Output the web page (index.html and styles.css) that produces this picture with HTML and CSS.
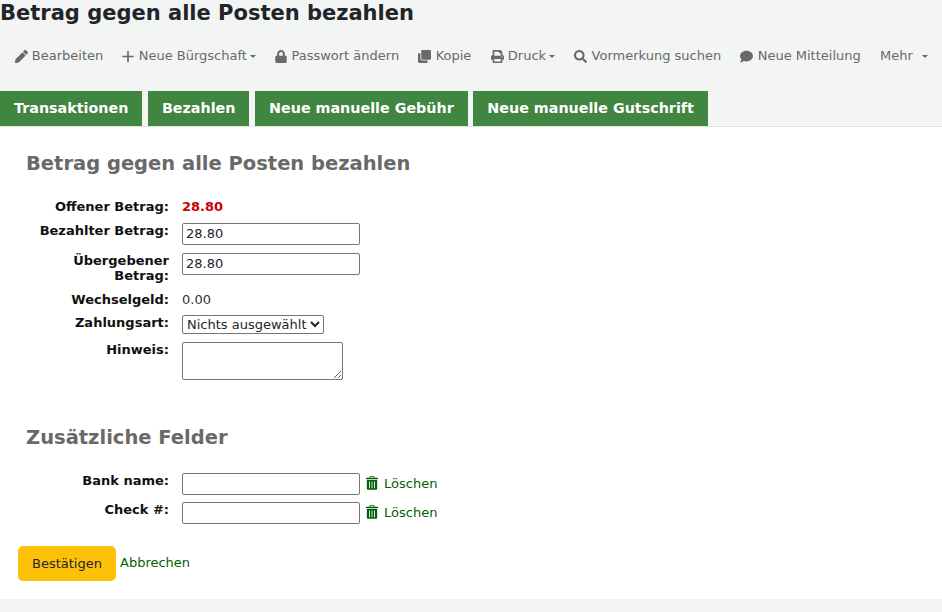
FILE: index.html
```html
<!DOCTYPE html>
<html lang="de">
<head>
<meta charset="utf-8">
<title>Betrag gegen alle Posten bezahlen</title>
<link rel="stylesheet" href="styles.css">
</head>
<body>
<h1 class="page-title">Betrag gegen alle Posten bezahlen</h1>
<div class="toolbar">
  <a class="tool"><svg class="ico" viewBox="0 0 512 512"><path d="M497.9 142.1l-46.1 46.1c-4.7 4.7-12.3 4.7-17 0l-111-111c-4.7-4.7-4.7-12.3 0-17l46.1-46.1c18.7-18.7 49.1-18.7 67.9 0l60.1 60.1c18.8 18.7 18.8 49.1 0 67.9zM284.2 99.8L21.6 362.4.4 483.9c-2.9 16.4 11.4 30.6 27.8 27.8l121.5-21.3 262.6-262.6c4.7-4.7 4.7-12.3 0-17l-111-111c-4.8-4.7-12.4-4.7-17.1 0z"/></svg>Bearbeiten</a>
  <a class="tool"><svg class="ico ico-narrow" viewBox="0 0 512 512"><path d="M220 16h72v204h204v72H292v204h-72V292H16v-72h204z"/></svg>Neue Bürgschaft<span class="caret"></span></a>
  <a class="tool"><svg class="ico ico-narrow" viewBox="0 0 448 512"><path d="M400 224h-24v-72C376 68.2 307.8 0 224 0S72 68.2 72 152v72H48c-26.5 0-48 21.5-48 48v192c0 26.5 21.5 48 48 48h352c26.5 0 48-21.5 48-48V272c0-26.5-21.5-48-48-48zm-104 0H152v-72c0-39.7 32.3-72 72-72s72 32.3 72 72v72z"/></svg>Passwort ändern</a>
  <a class="tool"><svg class="ico" viewBox="0 0 512 512"><path d="M464 0c26.51 0 48 21.49 48 48v288c0 26.51-21.49 48-48 48H176c-26.51 0-48-21.49-48-48V48c0-26.51 21.49-48 48-48h288M176 416c-44.112 0-80-35.888-80-80V128H48c-26.51 0-48 21.49-48 48v288c0 26.51 21.49 48 48 48h288c26.51 0 48-21.49 48-48v-48H176z"/></svg>Kopie</a>
  <a class="tool"><svg class="ico" viewBox="0 0 512 512"><path d="M448 192V77.25c0-8.49-3.37-16.62-9.37-22.63L393.37 9.37c-6-6-14.14-9.37-22.63-9.37H96C78.33 0 64 14.33 64 32v160c-35.35 0-64 28.65-64 64v112c0 8.84 7.16 16 16 16h48v96c0 17.67 14.33 32 32 32h320c17.67 0 32-14.33 32-32v-96h48c8.84 0 16-7.16 16-16V256c0-35.35-28.65-64-64-64zm-64 256H128v-96h256v96zm0-224H128V64h192v48c0 8.84 7.16 16 16 16h48v96zm48 72c-13.25 0-24-10.75-24-24 0-13.26 10.75-24 24-24s24 10.74 24 24c0 13.25-10.75 24-24 24z"/></svg>Druck<span class="caret"></span></a>
  <a class="tool"><svg class="ico" viewBox="0 0 512 512"><path d="M505 442.7L405.3 343c-4.5-4.5-10.6-7-17-7H372c27.6-35.3 44-79.7 44-128C416 93.1 322.9 0 208 0S0 93.1 0 208s93.1 208 208 208c48.3 0 92.7-16.4 128-44v16.3c0 6.4 2.5 12.5 7 17l99.7 99.7c9.4 9.4 24.6 9.4 33.9 0l28.3-28.3c9.4-9.4 9.4-24.6.1-34zM208 336c-70.7 0-128-57.2-128-128 0-70.7 57.2-128 128-128 70.7 0 128 57.2 128 128 0 70.7-57.2 128-128 128z"/></svg>Vormerkung suchen</a>
  <a class="tool"><svg class="ico" viewBox="0 0 512 512"><path d="M256 32C114.6 32 0 125.1 0 240c0 49.6 21.4 95 57 130.7C44.5 421.1 2.7 466 2.2 466.5c-2.2 2.3-2.8 5.7-1.5 8.7S4.8 480 8 480c66.3 0 116-31.8 140.6-51.4 32.7 12.3 69 19.4 107.4 19.4 141.4 0 256-93.1 256-208S397.4 32 256 32z"/></svg>Neue Mitteilung</a>
  <a class="tool tool-more">Mehr<span class="caret caret-more"></span></a>
</div>
<div class="tabs">
  <a class="tab">Transaktionen</a>
  <a class="tab">Bezahlen</a>
  <a class="tab">Neue manuelle Gebühr</a>
  <a class="tab">Neue manuelle Gutschrift</a>
</div>
<main class="panel">
  <form>
    <h2 class="section-title">Betrag gegen alle Posten bezahlen</h2>
    <div class="rows">
      <div class="row row-owed"><label class="lab">Offener Betrag:</label><span class="owed">28.80</span></div>
      <div class="row row-paid"><label class="lab">Bezahlter Betrag:</label><input class="field" type="text" value="28.80"></div>
      <div class="row row-given"><label class="lab">Übergebener Betrag:</label><input class="field" type="text" value="28.80"></div>
      <div class="row row-change"><label class="lab">Wechselgeld:</label><span class="val">0.00</span></div>
      <div class="row row-type"><label class="lab">Zahlungsart:</label><select class="sel"><option>Nichts ausgewählt</option></select></div>
      <div class="row row-note"><label class="lab">Hinweis:</label><textarea class="note"></textarea></div>
    </div>
    <h2 class="section-title section-extra">Zusätzliche Felder</h2>
    <div class="rows">
      <div class="row row-extra"><label class="lab">Bank name:</label><input class="field" type="text"><a class="del"><svg class="trash" viewBox="0 0 448 512"><path fill-rule="evenodd" d="M160 0h128c18 0 32 14 32 32v32h112c9 0 16 7 16 16v16c0 9-7 16-16 16H16c-9 0-16-7-16-16V80c0-9 7-16 16-16h112V32c0-18 14-32 32-32zm0 32v32h128V32zM32 144h384v320c0 26-22 48-48 48H80c-26 0-48-22-48-48zm80 56v256h32V200zm96 0v256h32V200zm96 0v256h32V200z"/></svg>Löschen</a></div>
      <div class="row row-extra"><label class="lab">Check #:</label><input class="field" type="text"><a class="del"><svg class="trash" viewBox="0 0 448 512"><path fill-rule="evenodd" d="M160 0h128c18 0 32 14 32 32v32h112c9 0 16 7 16 16v16c0 9-7 16-16 16H16c-9 0-16-7-16-16V80c0-9 7-16 16-16h112V32c0-18 14-32 32-32zm0 32v32h128V32zM32 144h384v320c0 26-22 48-48 48H80c-26 0-48-22-48-48zm80 56v256h32V200zm96 0v256h32V200zm96 0v256h32V200z"/></svg>Löschen</a></div>
    </div>
    <div class="actions">
      <button class="submit" type="button">Bestätigen</button>
      <a class="cancel">Abbrechen</a>
    </div>
  </form>
</main>
</body>
</html>
```
FILE: styles.css
```css
html, body { margin: 0; padding: 0; }
body {
  background: #f3f4f4;
  color: #000;
  font-family: "DejaVu Sans", sans-serif;
  font-size: 13px;
  height: 612px;
  overflow: hidden;
}
.page-title {
  margin: 0;
  height: 29px;
  color: #212529;
  font-size: 21px;
  line-height: 26px;
  font-weight: 700;
}
.toolbar {
  display: flex;
  align-items: center;
  height: 52px;
  padding: 2px 0 0 14.5px;
  box-sizing: border-box;
  color: #696969;
  line-height: 18px;
}
.tool { display: flex; align-items: center; margin-right: 19.2px; white-space: nowrap; }
.ico { width: 13px; height: 13px; fill: #696969; margin-right: 4.3px; flex: none; }
.ico-narrow { width: 12px; }
.caret {
  display: inline-block;
  margin-left: 3px;
  border-top: 3px solid #696969;
  border-left: 3px solid transparent;
  border-right: 3px solid transparent;
}
.caret-more { margin-left: 9px; }
.tool-more { margin-right: 0; }
.tabs { display: flex; gap: 5.6px; height: 35px; margin-top: 10px; }
.tab {
  display: flex;
  align-items: center;
  padding: 0 14px 2px;
  background: #408540;
  color: #fff;
  font-weight: 700;
  font-size: 14.3px;
}
.panel {
  background: #fff;
  border-top: 1px solid #e0e2e2;
  height: 473px;
  padding: 0 18px;
  box-sizing: border-box;
}
.section-title {
  margin: 0;
  padding: 25px 0 0 8px;
  color: #696969;
  font-size: 19.5px;
  line-height: 23px;
  font-weight: 700;
}
.section-extra { padding-top: 0; margin-top: 46px; }
.rows { display: flex; flex-direction: column; }
.row { display: flex; align-items: flex-start; }
.lab {
  width: 151px;
  margin-right: 13px;
  flex: none;
  text-align: right;
  font-weight: 700;
  line-height: 15px;
  color: #111;
}
.owed { color: #c00; font-weight: 700; line-height: 15px; }
.val { color: #333; line-height: 15px; }
.field {
  width: 178px;
  height: 22px;
  box-sizing: border-box;
  margin: 0;
  padding: 0 3px 2px;
  border: 1px solid #767676;
  border-radius: 2px;
  background: #fff;
  font: 13px "DejaVu Sans", sans-serif;
  color: #212529;
}
.sel {
  height: 19px;
  width: 142px;
  margin: 0;
  padding: 0;
  border: 1px solid #767676;
  border-radius: 2px;
  background: #fff;
  font: 13px "DejaVu Sans", sans-serif;
  color: #212529;
}
.note {
  display: block;
  width: 161px;
  height: 38px;
  box-sizing: border-box;
  margin: 0;
  border: 1px solid #767676;
  border-radius: 2px;
}
.row-owed { margin-top: 24px; height: 24px; }
.row-paid { height: 30px; }
.row-given { height: 39px; }
.row-change { height: 23px; }
.row-type { height: 27px; }
.row-note { height: 38px; }
.row-extra { height: 29px; }
.section-extra + .rows { margin-top: 24px; }
.del { display: flex; align-items: center; height: 20px; margin-left: 6px; color: #006100; }
.trash { width: 12px; height: 14px; fill: #006100; margin-right: 6px; }
.actions { display: flex; align-items: center; margin-top: 15px; }
.submit {
  width: 98px;
  height: 35px;
  margin: 0;
  padding: 0;
  border: 0;
  border-radius: 5px;
  background: #ffc107;
  color: #212529;
  font: 13px "DejaVu Sans", sans-serif;
}
.cancel { margin-left: 4px; margin-top: -2px; color: #006100; }
```
